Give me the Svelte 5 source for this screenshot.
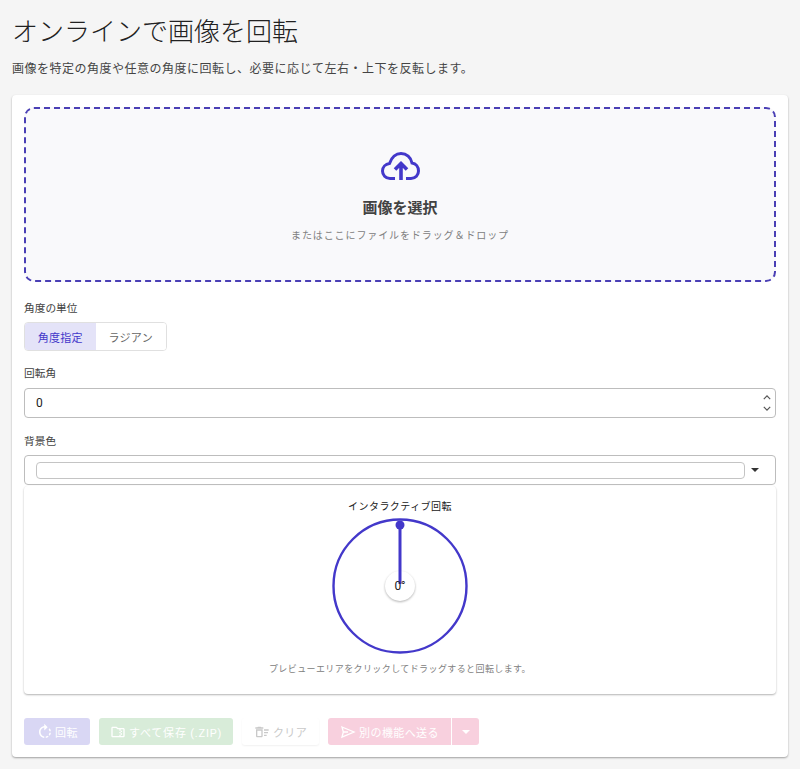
<script lang="ts">
	let unit = $state('deg');
	let angle = $state(0);
</script>

<main class="page">
	<h1>オンラインで画像を回転</h1>
	<p class="lede">画像を特定の角度や任意の角度に回転し、必要に応じて左右・上下を反転します。</p>

	<section class="card">
		<div class="drop">
			<svg class="cloud" viewBox="0 0 39 28" width="39" height="28" aria-hidden="true">
				<path d="M14 26.5H9C4.5 26.5 1.5 23 1.5 19C1.5 15 4.5 12 8.5 11.5C10.5 5.5 15 1.5 20 1.5C25.5 1.5 30 5.5 31 11C35 11.5 37.5 15 37.5 19C37.5 23 34.5 26.5 30 26.5H25" />
				<path class="arrow" d="M20 28V12M14 17.5L20 11.5L26 17.5" />
			</svg>
			<div class="drop-title">画像を選択</div>
			<div class="drop-sub">またはここにファイルをドラッグ＆ドロップ</div>
		</div>

		<div class="label first">角度の単位</div>
		<div class="toggle">
			<button class:on={unit === 'deg'} onclick={() => (unit = 'deg')}>角度指定</button>
			<button class:on={unit === 'rad'} onclick={() => (unit = 'rad')}>ラジアン</button>
		</div>

		<div class="label second">回転角</div>
		<div class="field number">
			<span class="value">{angle}</span>
			<div class="spin">
				<svg viewBox="0 0 10 6" width="8" height="5" aria-hidden="true"><path d="M1 5l4-4 4 4" /></svg>
				<svg viewBox="0 0 10 6" width="8" height="5" aria-hidden="true"><path d="M1 1l4 4 4-4" /></svg>
			</div>
		</div>

		<div class="label third">背景色</div>
		<div class="field color">
			<div class="swatch"></div>
			<span class="caret"></span>
		</div>

		<div class="preview">
			<div class="preview-title">インタラクティブ回転</div>
			<div class="dial">
				<svg viewBox="0 0 136 136" width="136" height="136" aria-hidden="true">
					<circle cx="68" cy="68" r="66.5" fill="#fff" stroke="#4338ca" stroke-width="2.4" />
					<circle class="hub" cx="68" cy="68" r="15" fill="#fff" />
					<line x1="68" y1="7" x2="68" y2="66" stroke="#4338ca" stroke-width="3" />
					<circle cx="68" cy="7" r="4.5" fill="#4338ca" />
				</svg>
				<div class="readout">{angle}°</div>
			</div>
			<div class="hint">プレビューエリアをクリックしてドラッグすると回転します。</div>
		</div>

		<div class="actions">
			<button class="btn rotate" disabled>
				<svg viewBox="0 0 24 24" aria-hidden="true">
					<path
						fill="currentColor"
						d="M15.55 5.55 11 1v3.07C7.06 4.56 4 7.92 4 12s3.05 7.44 7 7.93v-2.02c-2.84-.48-5-2.94-5-5.91s2.16-5.43 5-5.91V10l4.55-4.45zM19.93 11c-.17-1.39-.72-2.73-1.62-3.89l-1.42 1.42c.54.75.88 1.6 1.02 2.47h2.02zM13 17.9v2.02c1.39-.17 2.74-.71 3.9-1.61l-1.44-1.44c-.75.54-1.59.89-2.46 1.03zm3.89-2.42 1.42 1.41c.9-1.16 1.45-2.5 1.62-3.89h-2.02c-.14.87-.48 1.72-1.02 2.48z"
					/>
				</svg>
				回転
			</button>
			<button class="btn save" disabled>
				<svg viewBox="0 0 24 24" aria-hidden="true">
					<path
						fill="currentColor"
						d="M20 6h-8l-2-2H4c-1.1 0-2 .9-2 2v12c0 1.1.9 2 2 2h16c1.1 0 2-.9 2-2V8c0-1.1-.9-2-2-2zm-4 10h2v-2h-2v-2h2v-2h-2V8h4v10h-4v-2zm0 0h-2v2H4V6h5.17l2 2H14v2h2v2h-2v2h2v2z"
					/>
				</svg>
				すべて保存 (.ZIP)
			</button>
			<button class="btn clear" disabled>
				<svg viewBox="0 0 24 24" aria-hidden="true">
					<path
						fill="currentColor"
						d="M15 16h4v2h-4zm0-8h7v2h-7zm0 4h6v2h-6zM3 18c0 1.1.9 2 2 2h6c1.1 0 2-.9 2-2V8H3v10zM5 10h6v8H5v-8zM10 4H6L5 5H2v2h12V5h-3z"
					/>
				</svg>
				クリア
			</button>
			<div class="split">
				<button class="btn send" disabled>
					<svg viewBox="0 0 24 24" aria-hidden="true">
						<path fill="none" stroke="currentColor" stroke-width="2" d="M3 4.5L21 12L3 19.5L5 12H12H5Z" />
					</svg>
					別の機能へ送る
				</button>
				<button class="btn more" disabled aria-label="別の機能"><span class="caret light"></span></button>
			</div>
		</div>
	</section>
</main>

<style>
	:global(body) {
		margin: 0;
		background: #f5f5f5;
		color: #212121;
		font-family: Roboto, 'Noto Sans CJK JP', sans-serif;
	}

	.page {
		padding: 12px;
	}

	h1 {
		margin: 2px 0 0;
		font-size: 26px;
		line-height: 36px;
		font-weight: 300;
		color: #212121;
	}

	.lede {
		margin: 9px 0 0;
		font-size: 12px;
		line-height: 20px;
		letter-spacing: 0.5px;
		color: #444;
	}

	.card {
		margin-top: 16px;
		padding: 12px;
		background: #fff;
		border-radius: 4px;
		box-shadow: 0 1px 2px rgba(0, 0, 0, 0.35);
	}

	.drop {
		height: 175px;
		box-sizing: border-box;
		border: 2px dashed #4a3fb5;
		border-radius: 10px;
		background: #f9f9fb;
		display: flex;
		flex-direction: column;
		align-items: center;
		padding-top: 43px;
	}

	.cloud {
		color: #4338ca;
	}

	.cloud path {
		fill: none;
		stroke: currentColor;
		stroke-width: 3;
	}

	.cloud path.arrow {
		stroke-width: 3.6;
	}

	.drop-title {
		margin-top: 16px;
		font-size: 15px;
		line-height: 24px;
		font-weight: 700;
		color: #424242;
	}

	.drop-sub {
		margin-top: 8px;
		font-size: 10px;
		line-height: 16px;
		letter-spacing: 0.9px;
		color: #808080;
	}

	.label {
		font-size: 10.7px;
		line-height: 16px;
		color: #424242;
	}

	.first {
		margin-top: 19px;
	}

	.second {
		margin-top: 15px;
	}

	.third {
		margin-top: 16px;
	}

	.toggle {
		display: inline-flex;
		margin-top: 5px;
		border: 1px solid #e0e0e0;
		border-radius: 4px;
		overflow: hidden;
		vertical-align: top;
	}

	.toggle button {
		width: 70.5px;
		height: 27px;
		padding: 0;
		border: 0;
		background: #fff;
		color: #666;
		font: inherit;
		font-size: 11px;
		letter-spacing: 0.3px;
	}

	.toggle button.on {
		background: #e4e3f8;
		color: #4338ca;
	}

	.field {
		box-sizing: border-box;
		height: 30px;
		border: 1px solid #bdbdbd;
		border-radius: 4px;
		display: flex;
		align-items: center;
		background: #fff;
	}

	.number {
		margin-top: 6px;
	}

	.value {
		padding-left: 11px;
		font-size: 12px;
		color: #212121;
	}

	.spin {
		margin-left: auto;
		margin-right: 4px;
		display: flex;
		flex-direction: column;
		gap: 6px;
	}

	.spin path {
		fill: none;
		stroke: #555;
		stroke-width: 1.5;
	}

	.color {
		margin-top: 5px;
		padding: 0 16px 0 11px;
		gap: 5px;
	}

	.swatch {
		flex: 1;
		height: 15px;
		border: 1px solid #c4c4c4;
		border-radius: 4px;
	}

	.caret {
		margin-left: 1px;
		width: 0;
		height: 0;
		border-left: 4px solid transparent;
		border-right: 4px solid transparent;
		border-top: 4px solid #333;
	}

	.caret.light {
		display: block;
		margin: 0;
		border-top-color: #fff;
	}

	.preview {
		margin-top: 1px;
		height: 208px;
		box-sizing: border-box;
		padding-top: 13px;
		border-radius: 4px;
		background: #fff;
		box-shadow: 0 1px 2px rgba(0, 0, 0, 0.3);
		display: flex;
		flex-direction: column;
		align-items: center;
	}

	.preview-title {
		font-size: 10px;
		line-height: 16px;
		letter-spacing: 0.45px;
		color: #212121;
	}

	.dial {
		position: relative;
		width: 136px;
		height: 136px;
		margin-top: 3px;
	}

	.dial svg {
		display: block;
	}

	.hub {
		filter: drop-shadow(0 1px 1px rgba(0, 0, 0, 0.3));
	}

	.readout {
		position: absolute;
		inset: 0;
		display: flex;
		align-items: center;
		justify-content: center;
		font-size: 12px;
		color: #212121;
	}

	.hint {
		margin-top: 8px;
		font-size: 9px;
		line-height: 14px;
		letter-spacing: 0.4px;
		color: #808080;
	}

	.actions {
		margin-top: 24px;
		display: flex;
		gap: 9px;
	}

	.btn {
		height: 27px;
		padding: 0;
		border: 0;
		border-radius: 3px;
		color: #fff;
		font: inherit;
		font-size: 11px;
		letter-spacing: 0.4px;
		display: inline-flex;
		align-items: center;
		justify-content: center;
		gap: 3px;
	}

	.btn svg {
		width: 16px;
		height: 16px;
	}

	.rotate {
		width: 66px;
		gap: 1px;
		background: #d9d7f4;
	}

	.rotate svg {
		width: 18px;
		height: 18px;
	}

	.save {
		width: 134px;
		background: #d8ecd9;
		letter-spacing: 0.8px;
	}

	.clear {
		width: 77px;
		background: #fff;
		color: #c9c9c9;
		box-shadow: 0 1px 2px rgba(0, 0, 0, 0.06);
	}

	.split {
		display: flex;
		gap: 1px;
	}

	.send {
		width: 123px;
		background: #f8d0de;
		border-radius: 3px 0 0 3px;
	}

	.more {
		width: 27px;
		background: #f8d0de;
		border-radius: 0 3px 3px 0;
	}
</style>
